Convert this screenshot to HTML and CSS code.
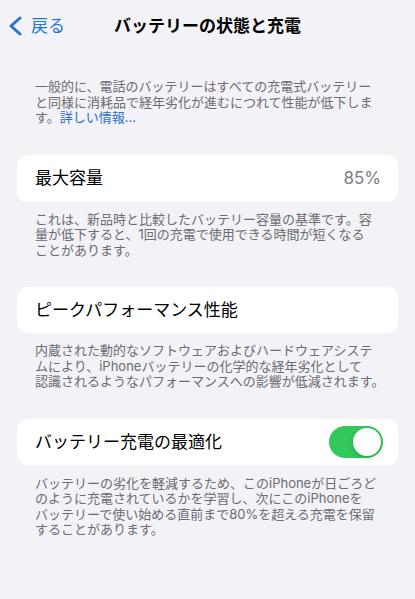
FILE: index.html
```html
<!DOCTYPE html>
<html lang="ja">
<head>
<meta charset="utf-8">
<title>バッテリーの状態と充電</title>
<link rel="stylesheet" href="styles.css">
</head>
<body>
<header class="nav">
  <a class="back" href="#">
    <svg class="chev" width="14" height="20" viewBox="0 0 14 20" aria-hidden="true"><path d="M12 2 L3 10 L12 18" fill="none" stroke="currentColor" stroke-width="3" stroke-linecap="round" stroke-linejoin="round"/></svg>
    <span>戻る</span>
  </a>
  <h1 class="title">バッテリーの状態と充電</h1>
  <span class="nav-spacer"></span>
</header>
<main class="content">
  <p class="note intro">一般的に、電話のバッテリーはすべての充電式バッテリー<br>と同様に消耗品で経年劣化が進むにつれて性能が低下しま<br>す。<a class="link" href="#">詳しい情報...</a></p>

  <section class="group">
    <div class="cell">
      <span class="label">最大容量</span>
      <span class="value">85%</span>
    </div>
    <p class="note">これは、新品時と比較したバッテリー容量の基準です。容<br>量が低下すると、1回の充電で使用できる時間が短くなる<br>ことがあります。</p>
  </section>

  <section class="group">
    <div class="cell cell-b">
      <span class="label">ピークパフォーマンス性能</span>
    </div>
    <p class="note">内蔵された動的なソフトウェアおよびハードウェアシステ<br>ムにより、iPhoneバッテリーの化学的な経年劣化として<br>認識されるようなパフォーマンスへの影響が低減されます。</p>
  </section>

  <section class="group">
    <div class="cell cell-c">
      <span class="label">バッテリー充電の最適化</span>
      <span class="switch on"><span class="knob"></span></span>
    </div>
    <p class="note note-c">バッテリーの劣化を軽減するため、このiPhoneが日ごろど<br>のように充電されているかを学習し、次にこのiPhoneを<br>バッテリーで使い始める直前まで80%を超える充電を保留<br>することがあります。</p>
  </section>
</main>
</body>
</html>
```

FILE: styles.css
```css
* { box-sizing: border-box; }

html, body {
  margin: 0;
  padding: 0;
}

body {
  background: #f2f2f7;
  color: #000;
  font-family: "Inter", "Noto Sans CJK JP", sans-serif;
  width: 415px;
  min-height: 599px;
}

.nav {
  display: grid;
  grid-template-columns: 1fr auto 1fr;
  align-items: center;
  height: 52px;
}

.back {
  display: flex;
  align-items: center;
  gap: 9px;
  padding-left: 8px;
  color: #2474d8;
  text-decoration: none;
  font-size: 17px;
  line-height: 20px;
}

.chev { display: block; }

.title {
  margin: 0;
  font-size: 17px;
  font-weight: 700;
  line-height: 20px;
  letter-spacing: 0;
}

.content {
  padding: 0 17px;
}

.note {
  margin: 0;
  padding: 10px 8px 0 18px;
  font-size: 13px;
  line-height: 15.5px;
  color: #6c6c71;
  white-space: nowrap;
}

.note-c { padding-top: 11px; }

.intro {
  padding-top: 27px;
}

.link {
  color: #2a6fc9;
  text-decoration: none;
}

.group {
  margin-top: 29px;
}

.cell {
  display: flex;
  align-items: center;
  justify-content: space-between;
  height: 47px;
  padding: 0 17px 0 18px;
  background: #fff;
  border-radius: 11px;
}

.cell-b { height: 46px; }
.cell-c { height: 46px; padding-right: 15px; }

.label {
  font-size: 17px;
  line-height: 20px;
}

.value {
  font-size: 17px;
  line-height: 20px;
  color: #7d7d82;
}

.switch {
  display: flex;
  align-items: center;
  justify-content: flex-end;
  width: 54px;
  height: 32px;
  padding: 2px;
  border-radius: 16px;
  background: #34c759;
}

.knob {
  display: block;
  width: 28px;
  height: 28px;
  border-radius: 50%;
  background: #fff;
  box-shadow: 0 0 0 0.5px rgba(0, 0, 0, 0.04), 0 2px 6px rgba(0, 0, 0, 0.15);
}
```
